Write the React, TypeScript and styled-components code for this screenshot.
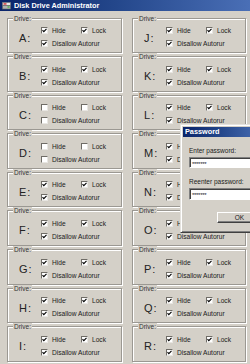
import React from 'react';
import styled, { createGlobalStyle } from 'styled-components';

const Global = createGlobalStyle`
  html, body { margin: 0; padding: 0; background: #d4d0c8; }
  body { width: 250px; height: 364px; overflow: hidden; font-family: "Liberation Sans", Arial, sans-serif; }
`;

const Window = styled.div`
  position: relative;
  width: 250px;
  height: 364px;
  overflow: hidden;
  background: #d4d0c8;
  font-family: "Liberation Sans", Arial, sans-serif;
  color: #1a1a1a;
`;

const TitleBar = styled.div<{ $compact?: boolean }>`
  height: ${p => (p.$compact ? 10 : 11)}px;
  display: flex;
  align-items: center;
  gap: ${p => (p.$compact ? 0 : 3)}px;
  padding-left: 2px;
  background: linear-gradient(90deg, #0a246a 0%, #23468a 45%, #4a6fb6 100%);
  color: #fff;
  font-weight: bold;
  font-size: 7.3px;
  line-height: 1;
  white-space: nowrap;
`;

const Body = styled.div`
  display: grid;
  grid-template-columns: 115px 114px;
  column-gap: 10px;
  padding: 3.5px 0 0 7px;
`;

const Column = styled.div`
  display: grid;
  grid-auto-rows: 38.6px;
`;

const Group = styled.fieldset`
  margin: 0;
  padding: 0;
  min-width: 0;
  height: 38.6px;
  box-sizing: border-box;
  border: 1px solid #9b9892;
  box-shadow: inset 1px 1px 0 #fff, 1px 1px 0 #fff;
`;

const Legend = styled.legend`
  margin-left: 5px;
  padding: 0 1px;
  font-size: 6.5px;
  line-height: 7px;
  color: #333;
  background: #d4d0c8;
`;

const Content = styled.div`
  display: grid;
  grid-template-columns: 33px 40px 1fr;
  grid-template-rows: 13px 13px;
  padding-top: 2.5px;
`;

const Letter = styled.div`
  grid-row: 1 / 3;
  display: flex;
  align-items: center;
  padding-left: 11px;
  padding-top: 1px;
  font-size: 11px;
  letter-spacing: 1px;
  color: #222;
`;

const Option = styled.label<{ $wide?: boolean }>`
  display: flex;
  align-items: center;
  gap: 4px;
  font-size: 6.6px;
  white-space: nowrap;
  grid-column: ${p => (p.$wide ? '2 / 4' : 'auto')};
`;

const Box = styled.span`
  width: 7px;
  height: 7px;
  box-sizing: border-box;
  background: #fff;
  border-top: 1px solid #6f6c66;
  border-left: 1px solid #6f6c66;
  border-right: 1px solid #e8e6e2;
  border-bottom: 1px solid #e8e6e2;
  display: flex;
  align-items: center;
  justify-content: center;
  flex-shrink: 0;
`;

const Check = ({ on }: { on: boolean }) => (
  <Box>
    {on && (
      <svg width="5" height="5" viewBox="0 0 5 5">
        <path d="M0.5 2.2 L1.8 3.6 L4.5 0.8" stroke="#000" strokeWidth="1.1" fill="none" />
      </svg>
    )}
  </Box>
);

const Dialog = styled.div`
  position: absolute;
  left: 180px;
  top: 124px;
  width: 88px;
  height: 109px;
  box-sizing: border-box;
  padding: 2px;
  background: #d4d0c8;
  border-top: 1px solid #e4e2de;
  border-left: 1px solid #e4e2de;
  border-right: 1px solid #404040;
  border-bottom: 1px solid #404040;
  box-shadow: inset 1px 1px 0 #fff, inset -1px -1px 0 #808080;
`;

const DialogBody = styled.div`
  display: flex;
  flex-direction: column;
  align-items: flex-start;
  padding: 10px 0 0 6px;
`;

const FieldLabel = styled.div<{ $first?: boolean }>`
  font-size: 6.5px;
  line-height: 8px;
  margin-top: ${p => (p.$first ? 0 : 10)}px;
  margin-bottom: 2px;
  white-space: nowrap;
`;

const Input = styled.div<{ $h: number }>`
  width: 80px;
  height: ${p => p.$h}px;
  box-sizing: border-box;
  background: #fff;
  border-top: 1px solid #808080;
  border-left: 1px solid #808080;
  border-right: 1px solid #fff;
  border-bottom: 1px solid #fff;
  box-shadow: inset 1px 1px 0 #404040;
  font-size: 6px;
  line-height: 1;
  padding: 2px 0 0 2px;
  letter-spacing: -0.3px;
  display: flex;
  align-items: center;
`;

const Button = styled.div`
  margin: 12px 0 0 28px;
  width: 45px;
  height: 11px;
  box-sizing: border-box;
  background: #d4d0c8;
  border-top: 1px solid #fff;
  border-left: 1px solid #fff;
  border-right: 1px solid #404040;
  border-bottom: 1px solid #404040;
  box-shadow: inset -1px -1px 0 #808080;
  font-size: 6.5px;
  display: flex;
  align-items: center;
  justify-content: center;
`;

const AppIcon = () => (
  <svg width="9" height="9" viewBox="0 0 9 9">
    <rect x="0.5" y="1.5" width="8" height="3" fill="#e8e8e8" stroke="#777" strokeWidth="0.6" />
    <rect x="0.5" y="4.5" width="8" height="3.5" fill="#b0b0b0" stroke="#666" strokeWidth="0.6" />
    <rect x="1.5" y="2.3" width="3" height="1.3" fill="#d02020" />
    <rect x="5.5" y="5.5" width="2" height="1" fill="#20c020" />
  </svg>
);

type Drive = { letter: string; hide: boolean; lock: boolean; autorun: boolean };

const mk = (letter: string, on: boolean): Drive => ({ letter, hide: on, lock: on, autorun: on });

const left: Drive[] = [mk('A', true), mk('B', true), mk('C', false), mk('D', false), mk('E', true), mk('F', true), mk('G', true), mk('H', true), mk('I', true)];
const right: Drive[] = [mk('J', true), mk('K', true), mk('L', true), mk('M', true), mk('N', true), mk('O', true), mk('P', true), mk('Q', true), mk('R', true)];

const DriveGroup = ({ d }: { d: Drive }) => (
  <Group>
    <Legend>Drive:</Legend>
    <Content>
      <Letter>{d.letter}:</Letter>
      <Option>
        <Check on={d.hide} />
        Hide
      </Option>
      <Option>
        <Check on={d.lock} />
        Lock
      </Option>
      <Option $wide>
        <Check on={d.autorun} />
        Disallow Autorur
      </Option>
    </Content>
  </Group>
);

export default function App() {
  return (
    <Window>
      <Global />
      <TitleBar>
        <AppIcon />
        Disk Drive Administrator
      </TitleBar>
      <Body>
        <Column>
          {left.map(d => (
            <DriveGroup key={d.letter} d={d} />
          ))}
        </Column>
        <Column>
          {right.map(d => (
            <DriveGroup key={d.letter} d={d} />
          ))}
        </Column>
      </Body>
      <Dialog>
        <TitleBar $compact>Password</TitleBar>
        <DialogBody>
          <FieldLabel $first>Enter password:</FieldLabel>
          <Input $h={11}>*******</Input>
          <FieldLabel>Reenter password:</FieldLabel>
          <Input $h={12}>*******</Input>
          <Button>OK</Button>
        </DialogBody>
      </Dialog>
    </Window>
  );
}
